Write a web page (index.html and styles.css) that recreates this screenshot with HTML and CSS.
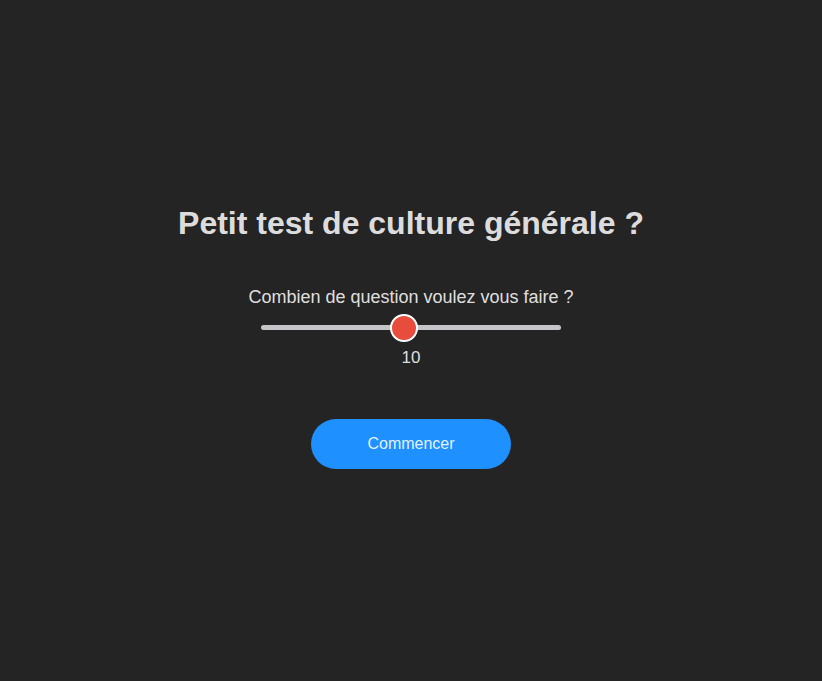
FILE: index.html
```html
<!DOCTYPE html>
<html lang="fr">
<head>
<meta charset="utf-8">
<title>Quiz</title>
<link rel="stylesheet" href="styles.css">
</head>
<body>
<main class="app">
  <h1 class="title">Petit test de culture générale ?</h1>
  <div class="settings">
    <label class="label" for="count">Combien de question voulez vous faire ?</label>
    <input class="slider" id="count" type="range" min="1" max="20" value="10">
    <span class="value">10</span>
  </div>
  <button class="start">Commencer</button>
</main>
</body>
</html>
```

FILE: styles.css
```css
html, body {
  margin: 0;
  padding: 0;
  background: #242424;
}
body {
  font-family: "Liberation Sans", Arial, sans-serif;
  color: rgba(255, 255, 255, 0.87);
}
.app {
  height: 681px;
  box-sizing: border-box;
  padding-bottom: 7px;
  display: flex;
  flex-direction: column;
  align-items: center;
  justify-content: center;
}
.title {
  margin: 0;
  font-size: 32px;
  font-weight: bold;
  line-height: 37px;
}
.settings {
  margin-top: 45px;
  display: flex;
  flex-direction: column;
  align-items: center;
}
.label {
  font-size: 18px;
  line-height: 21px;
}
.slider {
  -webkit-appearance: none;
  appearance: none;
  width: 300px;
  height: 28px;
  margin: 5.5px 0 0;
  background: transparent;
}
.slider::-webkit-slider-runnable-track {
  height: 5px;
  border-radius: 3px;
  background: #c3c5c8;
}
.slider::-webkit-slider-thumb {
  -webkit-appearance: none;
  appearance: none;
  width: 28px;
  height: 28px;
  margin-top: -11.5px;
  border-radius: 50%;
  background: #e74c3c;
  border: 2px solid #ffffff;
  box-sizing: border-box;
}
.value {
  margin-top: 6px;
  font-size: 17px;
  line-height: 20px;
}
.start {
  margin-top: 51px;
  width: 200px;
  height: 50px;
  border: none;
  border-radius: 25px;
  background: #1e90ff;
  color: rgba(255, 255, 255, 0.9);
  font-family: "Liberation Sans", Arial, sans-serif;
  font-size: 16px;
}
```
